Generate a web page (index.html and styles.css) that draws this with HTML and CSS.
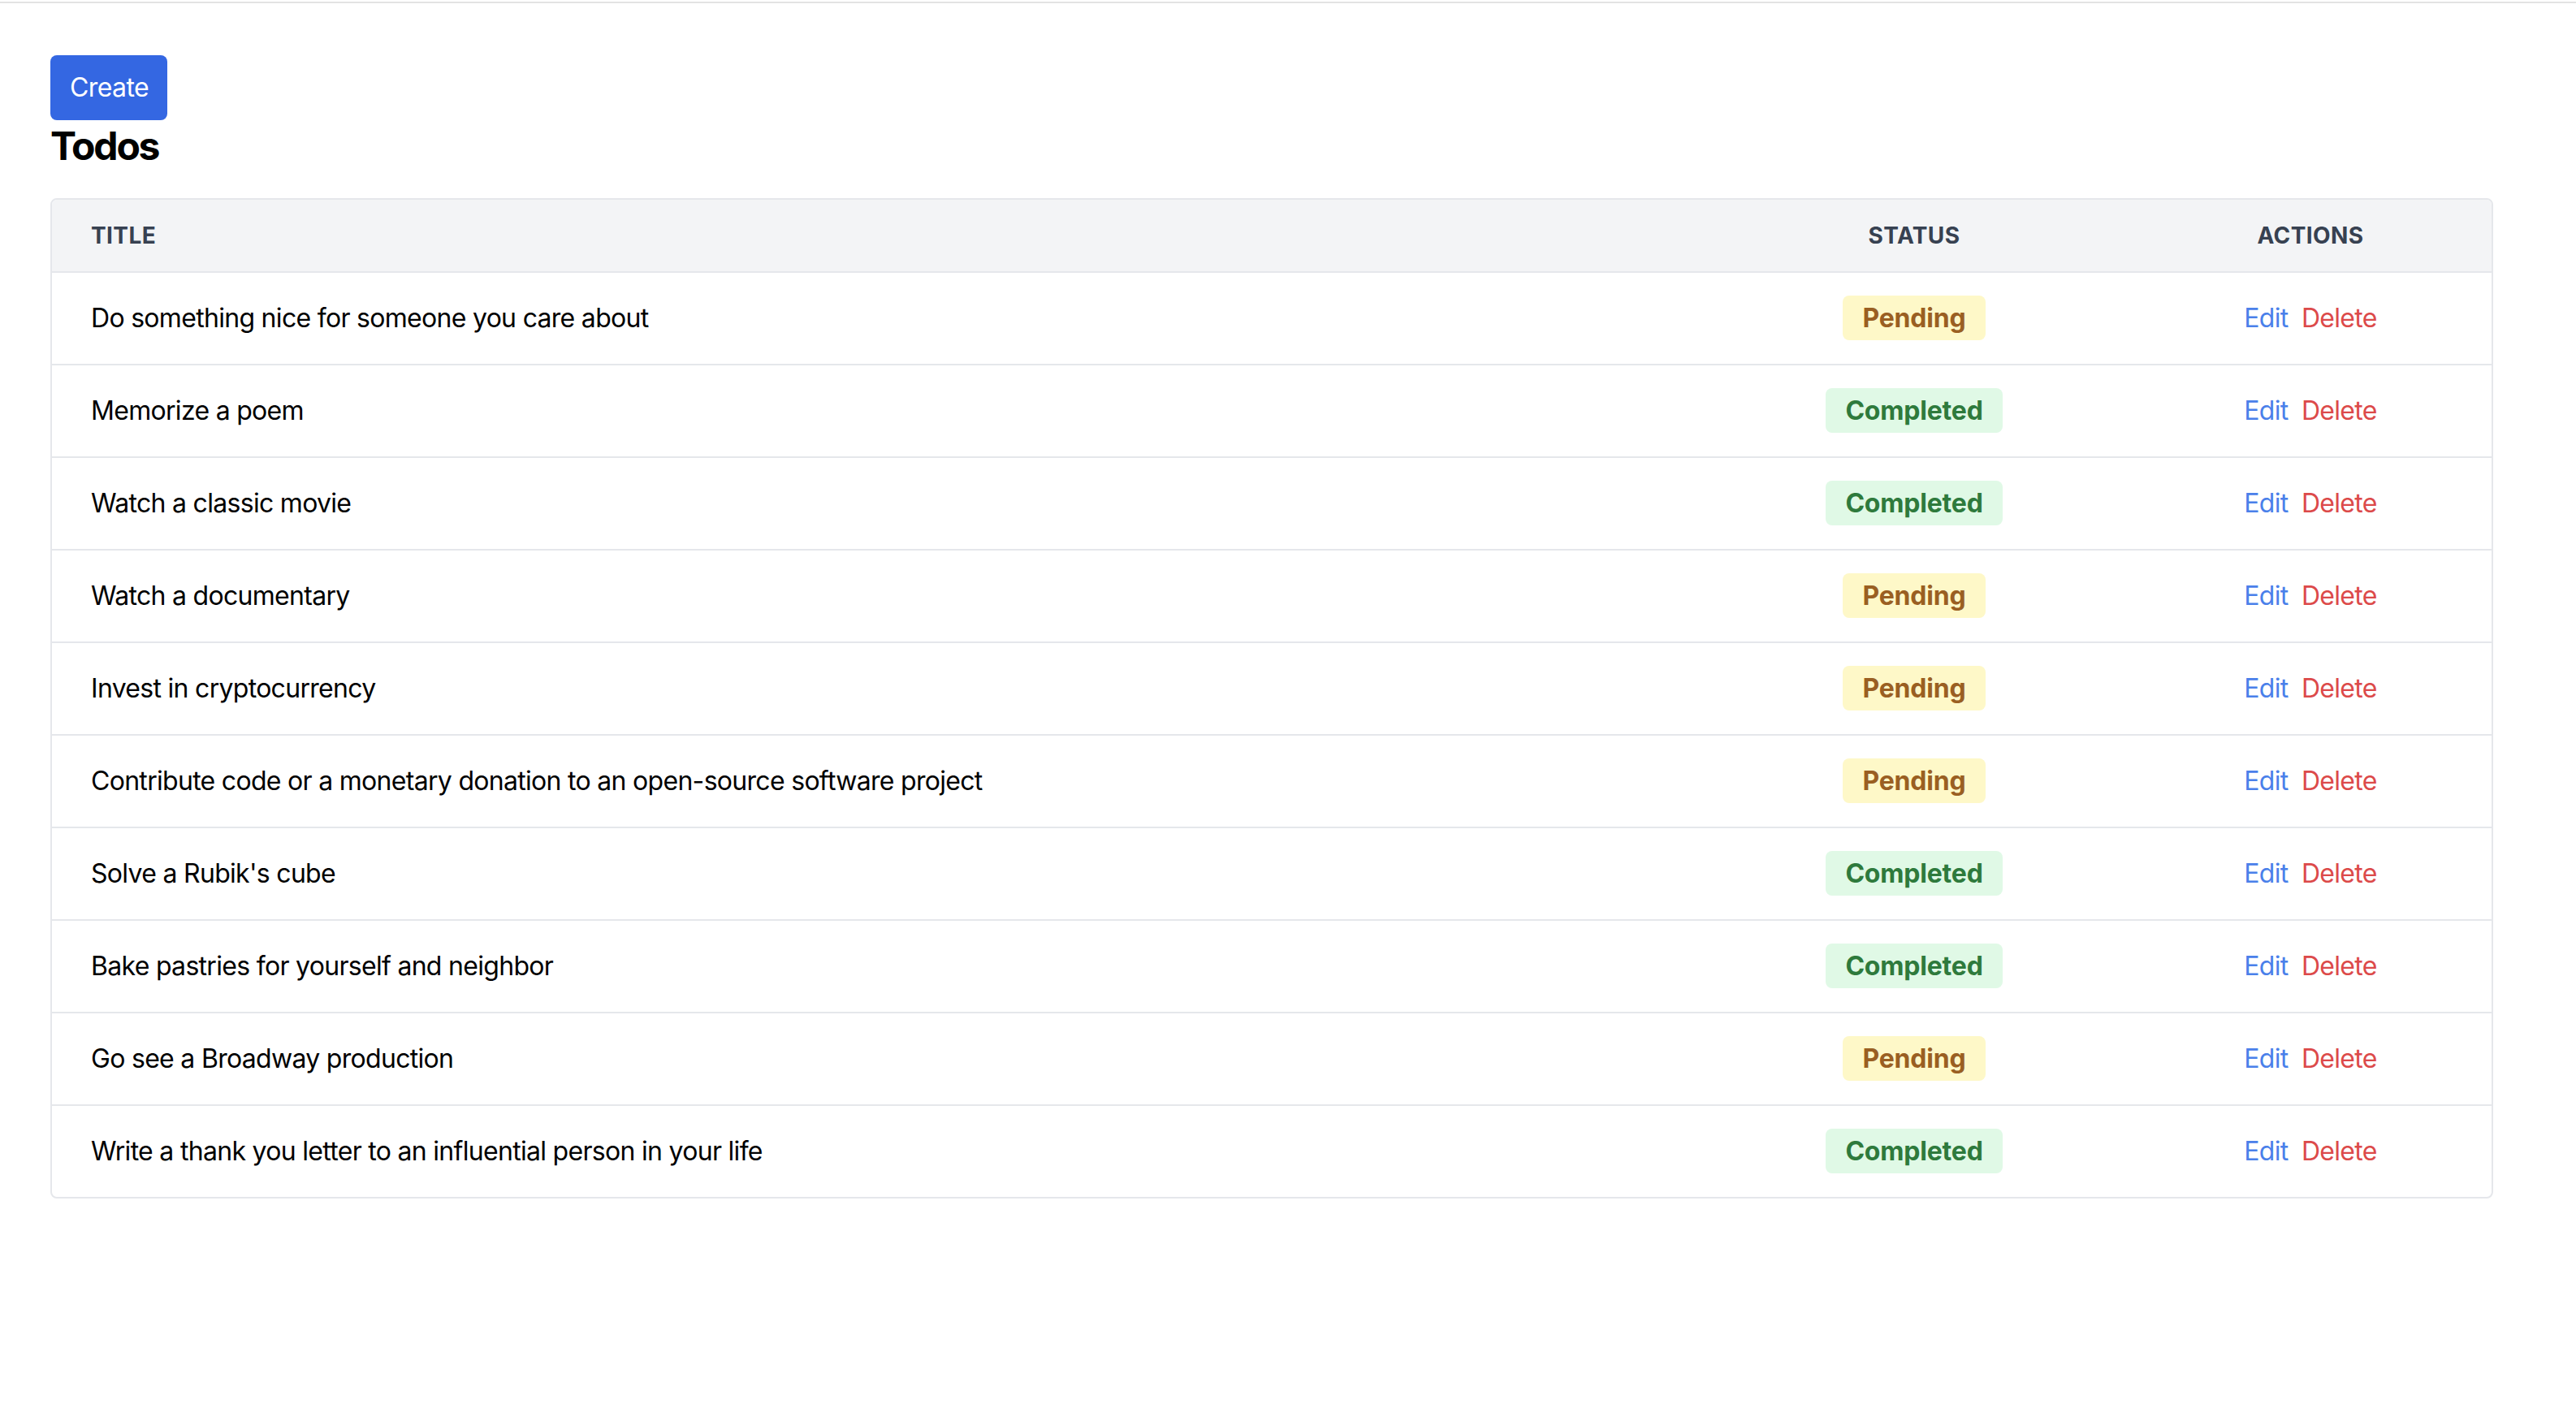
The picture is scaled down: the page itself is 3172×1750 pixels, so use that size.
FILE: index.html
```html
<!DOCTYPE html>
<html lang="en">
<head>
<meta charset="utf-8">
<title>Todos</title>
<link rel="stylesheet" href="styles.css">
</head>
<body>
<div class="topline"></div>
<main class="page">
  <button class="btn-create" type="button">Create</button>
  <h1 class="heading">Todos</h1>
  <table class="todos">
    <thead>
      <tr>
        <th class="col-title">Title</th>
        <th class="col-status">Status</th>
        <th class="col-actions">Actions</th>
      </tr>
    </thead>
    <tbody>
      <tr>
        <td>Do something nice for someone you care about</td>
        <td class="center"><span class="badge pending">Pending</span></td>
        <td class="center"><a class="edit">Edit</a> <a class="delete">Delete</a></td>
      </tr>
      <tr>
        <td>Memorize a poem</td>
        <td class="center"><span class="badge completed">Completed</span></td>
        <td class="center"><a class="edit">Edit</a> <a class="delete">Delete</a></td>
      </tr>
      <tr>
        <td>Watch a classic movie</td>
        <td class="center"><span class="badge completed">Completed</span></td>
        <td class="center"><a class="edit">Edit</a> <a class="delete">Delete</a></td>
      </tr>
      <tr>
        <td>Watch a documentary</td>
        <td class="center"><span class="badge pending">Pending</span></td>
        <td class="center"><a class="edit">Edit</a> <a class="delete">Delete</a></td>
      </tr>
      <tr>
        <td>Invest in cryptocurrency</td>
        <td class="center"><span class="badge pending">Pending</span></td>
        <td class="center"><a class="edit">Edit</a> <a class="delete">Delete</a></td>
      </tr>
      <tr>
        <td>Contribute code or a monetary donation to an open-source software project</td>
        <td class="center"><span class="badge pending">Pending</span></td>
        <td class="center"><a class="edit">Edit</a> <a class="delete">Delete</a></td>
      </tr>
      <tr>
        <td>Solve a Rubik's cube</td>
        <td class="center"><span class="badge completed">Completed</span></td>
        <td class="center"><a class="edit">Edit</a> <a class="delete">Delete</a></td>
      </tr>
      <tr>
        <td>Bake pastries for yourself and neighbor</td>
        <td class="center"><span class="badge completed">Completed</span></td>
        <td class="center"><a class="edit">Edit</a> <a class="delete">Delete</a></td>
      </tr>
      <tr>
        <td>Go see a Broadway production</td>
        <td class="center"><span class="badge pending">Pending</span></td>
        <td class="center"><a class="edit">Edit</a> <a class="delete">Delete</a></td>
      </tr>
      <tr>
        <td>Write a thank you letter to an influential person in your life</td>
        <td class="center"><span class="badge completed">Completed</span></td>
        <td class="center"><a class="edit">Edit</a> <a class="delete">Delete</a></td>
      </tr>
    </tbody>
  </table>
</main>
</body>
</html>
```
FILE: styles.css
```css
* {
  box-sizing: border-box;
}

html, body {
  margin: 0;
  padding: 0;
  background: #ffffff;
}

body {
  font-family: Inter, "Noto Sans", "Liberation Sans", sans-serif;
  color: #000000;
}

.topline {
  margin-top: 2px;
  height: 2px;
  background: #e3e3e3;
}

.page {
  padding: 64px 0 0 62px;
}

.btn-create {
  display: block;
  margin: 0;
  padding: 16px 24px;
  border: 0;
  border-radius: 8px;
  background: #3467e2;
  color: #ffffff;
  font-family: inherit;
  font-size: 32px;
  line-height: 48px;
  height: 80px;
  width: 144px;
  white-space: nowrap;
  letter-spacing: -0.6px;
}

.heading {
  margin: 0;
  font-size: 48px;
  line-height: 64px;
  font-weight: 700;
  color: #000000;
  letter-spacing: -2.2px;
}

.todos {
  margin-top: 32px;
  width: 3008px;
  table-layout: fixed;
  border-collapse: separate;
  border-spacing: 0;
  border: 2px solid #e5e7eb;
  border-radius: 8px;
  overflow: hidden;
}

.todos th {
  background: #f3f4f6;
  color: #374151;
  font-size: 28px;
  line-height: 40px;
  font-weight: 700;
  text-transform: uppercase;
  letter-spacing: 0.4px;
  padding: 24px 48px;
  text-align: center;
}

.todos th.col-title {
  text-align: left;
}

.todos th.col-status {
  width: 530px;
}

.todos th.col-actions {
  width: 446px;
}

.todos td {
  padding: 32px 48px;
  font-size: 32px;
  line-height: 48px;
  border-top: 2px solid #e5e7eb;
  color: #000000;
  white-space: nowrap;
  letter-spacing: -0.7px;
}

.todos td.center {
  text-align: center;
}

.badge {
  padding: 8px 24px;
  border-radius: 8px;
  font-weight: 700;
  letter-spacing: -0.2px;
}

.badge.pending {
  background: #fef8c8;
  color: #9a5f22;
}

.badge.completed {
  background: #e0f9e6;
  color: #2e7a3c;
}

.edit {
  color: #4a80ea;
  margin-right: 8px;
  cursor: pointer;
}

.delete {
  color: #dc4a4a;
  cursor: pointer;
}
```
